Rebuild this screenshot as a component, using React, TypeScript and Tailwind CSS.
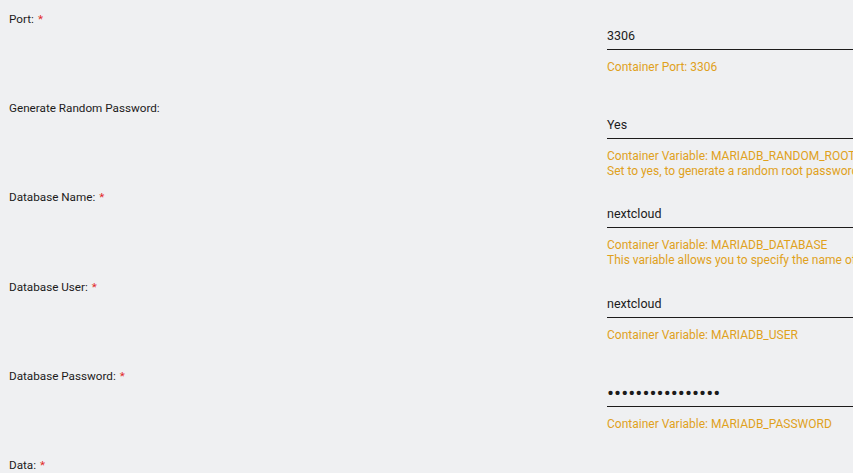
type Field = {
  label: string;
  required?: boolean;
  value: string;
  secret?: boolean;
  notes: string[];
};

const fields: Field[] = [
  { label: "Port:", required: true, value: "3306", notes: ["Container Port: 3306"] },
  {
    label: "Generate Random Password:",
    value: "Yes",
    notes: [
      "Container Variable: MARIADB_RANDOM_ROOT_PASSWORD",
      "Set to yes, to generate a random root password when the container starts.",
    ],
  },
  {
    label: "Database Name:",
    required: true,
    value: "nextcloud",
    notes: [
      "Container Variable: MARIADB_DATABASE",
      "This variable allows you to specify the name of a database to be created on image startup.",
    ],
  },
  { label: "Database User:", required: true, value: "nextcloud", notes: ["Container Variable: MARIADB_USER"] },
  {
    label: "Database Password:",
    required: true,
    value: "nextcloudpass123",
    secret: true,
    notes: ["Container Variable: MARIADB_PASSWORD"],
  },
  { label: "Data:", required: true, value: "/mnt/user/appdata/mariadb", notes: ["Container Path: /config"] },
];

function FieldRow({ label, required, value, secret, notes }: Field) {
  return (
    <div className="flex h-[89.2px] shrink-0">
      <div className="w-[598px] shrink-0 pl-[9px] text-[11.7px] leading-[18px] text-[#1c1b1b]">
        {label}
        {required && <span className="ml-[4px] text-[#e22828]">*</span>}
      </div>
      <div className="flex-1 pt-[17px] pl-[9px] min-w-0 overflow-hidden">
        <div className="h-[23px] w-[400px] border-b border-[#1c1b1b] pb-[4px] text-[12.5px] leading-[18px] text-[#1c1b1b]">
          {secret ? (
            <span className="text-[21px] leading-[18px]">{"\u2022".repeat(value.length)}</span>
          ) : (
            value
          )}
        </div>
        <div className="mt-[10px] text-[12px] leading-[15px] text-[#e0a11c] whitespace-nowrap">
          {notes.map((n) => (
            <div key={n}>{n}</div>
          ))}
        </div>
      </div>
    </div>
  );
}

export default function App() {
  return (
    <div
      className="h-[473px] w-[853px] overflow-hidden bg-[#eff0f2] pt-[10px]"
      style={{ fontFamily: 'Roboto, "Noto Sans", sans-serif' }}
    >
      {fields.map((f) => (
        <FieldRow key={f.label} {...f} />
      ))}
    </div>
  );
}
